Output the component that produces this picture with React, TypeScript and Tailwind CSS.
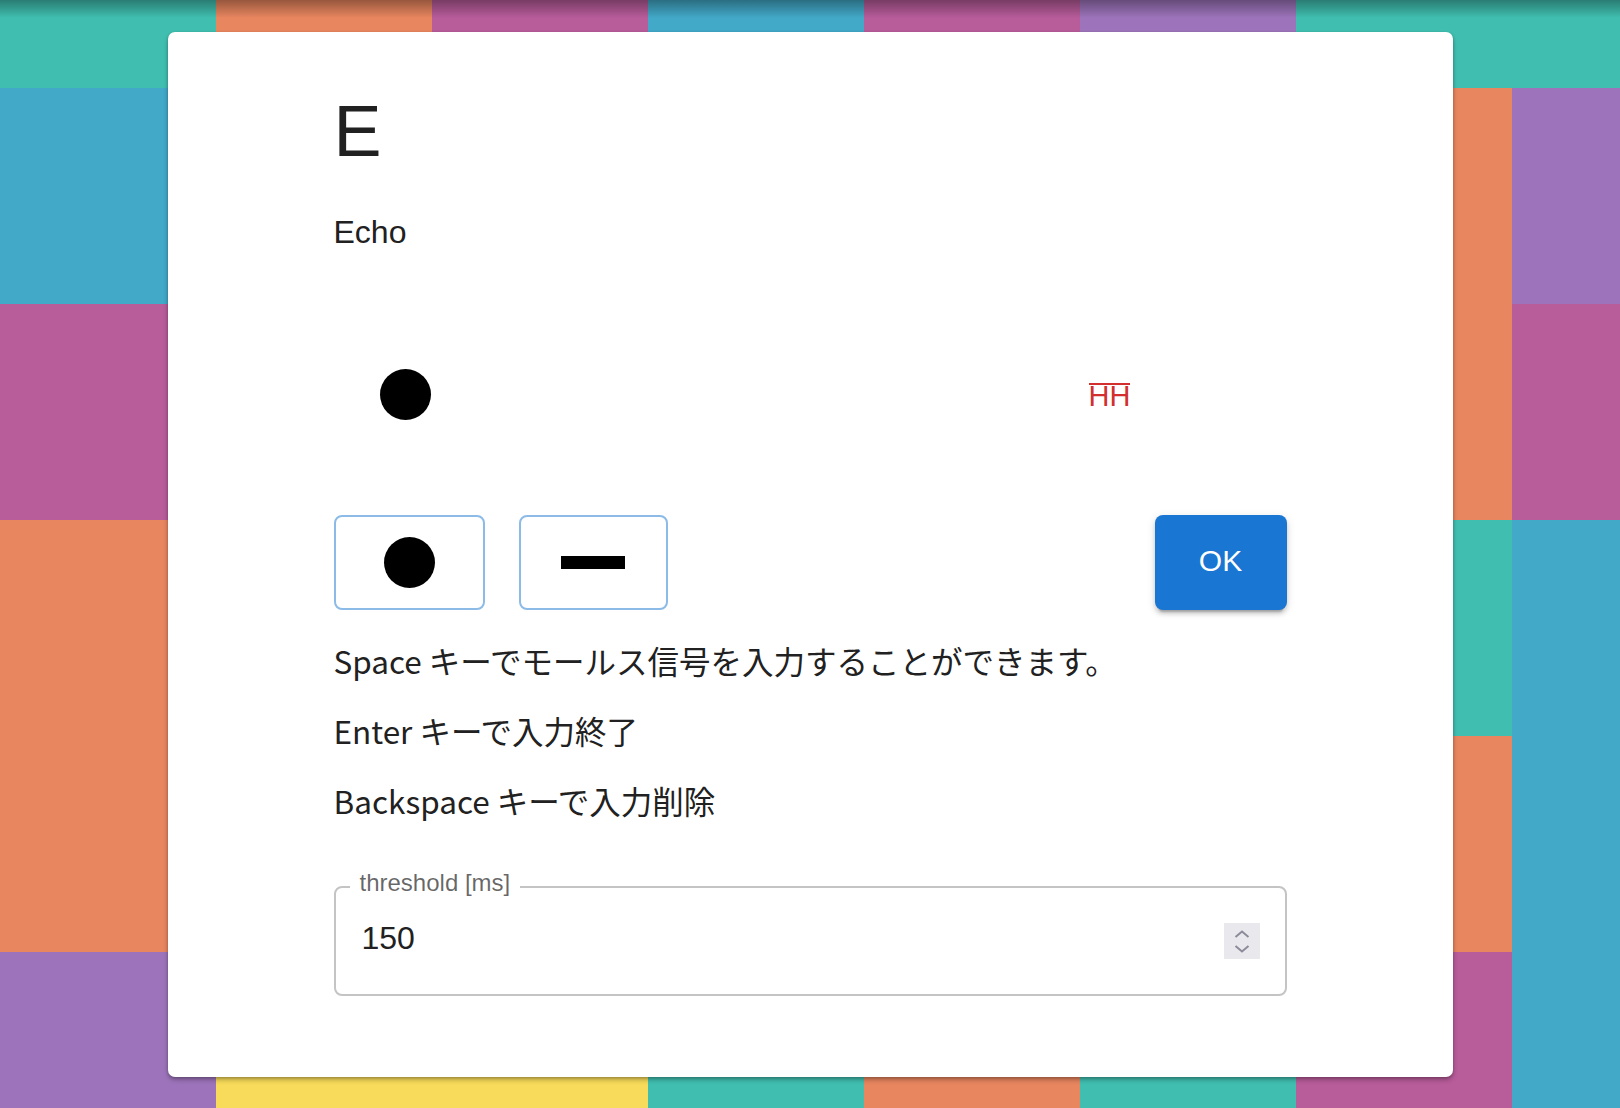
import React from "react";

const TEAL = "bg-[#40bfb0]";
const ORANGE = "bg-[#e8865f]";
const MAGENTA = "bg-[#b85c9a]";
const BLUE = "bg-[#42a9c8]";
const PURPLE = "bg-[#9d74bb]";
const YELLOW = "bg-[#f8db5a]";

// background tiles, 8 columns x 6 rows of 216px
const tiles: string[][] = [
  [TEAL, ORANGE, MAGENTA, BLUE, MAGENTA, PURPLE, TEAL, TEAL],
  [BLUE, TEAL, ORANGE, PURPLE, BLUE, MAGENTA, ORANGE, PURPLE],
  [MAGENTA, BLUE, TEAL, ORANGE, YELLOW, TEAL, ORANGE, MAGENTA],
  [ORANGE, PURPLE, MAGENTA, TEAL, BLUE, ORANGE, TEAL, BLUE],
  [ORANGE, TEAL, BLUE, MAGENTA, PURPLE, TEAL, ORANGE, BLUE],
  [PURPLE, YELLOW, YELLOW, TEAL, ORANGE, TEAL, MAGENTA, BLUE],
];

function Background() {
  return (
    <div className="absolute left-0 top-[-128px] grid grid-cols-[repeat(8,216px)] grid-rows-[repeat(6,216px)]">
      {tiles.flat().map((c, i) => (
        <div key={i} className={c} />
      ))}
    </div>
  );
}

function Dot() {
  return <div className="w-[51px] h-[51px] rounded-full bg-black" />;
}

function Spinner() {
  return (
    <div className="w-[36px] h-[36px] bg-[#e9e9ed] flex flex-col items-center justify-center gap-[7px]">
      <svg width="16" height="8" viewBox="0 0 16 8" fill="none">
        <path d="M1.5 7 L8 1.5 L14.5 7" stroke="#8b8b99" strokeWidth="2" />
      </svg>
      <svg width="16" height="8" viewBox="0 0 16 8" fill="none">
        <path d="M1.5 1 L8 6.5 L14.5 1" stroke="#8b8b99" strokeWidth="2" />
      </svg>
    </div>
  );
}

export default function App() {
  return (
    <div className="relative w-[1620px] h-[1108px] overflow-hidden">
      <Background />
      <div className="absolute top-0 left-0 right-0 h-[18px] bg-gradient-to-b from-black/35 to-transparent" />

      <div className="relative pt-[32px]">
        <div className="mx-auto w-[1285px] bg-white rounded-[7px] shadow-[0_3px_5px_rgba(0,0,0,0.25),0_1px_3px_rgba(0,0,0,0.2)] px-[166px] pt-[57px] pb-[81px] text-[#212121]">
          <h1 className="text-[72px] leading-[84px] font-['Liberation_Sans',Arial,sans-serif]">
            E
          </h1>
          <p className="mt-[35px] text-[32px] leading-[48px] font-['Liberation_Sans',Arial,sans-serif]">
            Echo
          </p>

          {/* morse display */}
          <div className="mt-[88px] h-[101px] flex items-center pl-[46px]">
            <Dot />
            <span className="ml-[658px] inline-block border-t-2 border-[#d32f2f] text-[#d32f2f] text-[29px] leading-[22px] font-['Liberation_Sans',Arial,sans-serif]">
              HH
            </span>
          </div>

          {/* input buttons */}
          <div className="mt-[70px] flex items-center">
            <button className="w-[151px] h-[95px] border-2 border-[#8cbbe8] rounded-[8px] flex items-center justify-center">
              <Dot />
            </button>
            <button className="ml-[34px] w-[149px] h-[95px] border-2 border-[#8cbbe8] rounded-[8px] flex items-center justify-center">
              <div className="w-[64px] h-[13px] bg-black" />
            </button>
            <button className="ml-auto w-[132px] h-[95px] pb-[4px] rounded-[8px] bg-[#1976d2] text-white text-[30px] font-['Liberation_Sans',Arial,sans-serif] shadow-[0_6px_2px_-4px_rgba(0,0,0,0.2),0_4px_4px_0_rgba(0,0,0,0.14),0_2px_10px_0_rgba(0,0,0,0.12)]">
              OK
            </button>
          </div>

          <div className="mt-[26px] flex flex-col gap-[22px] text-[31.5px] leading-[48px] font-['Noto_Sans_CJK_JP',sans-serif]">
            <p>Space キーでモールス信号を入力することができます。</p>
            <p>Enter キーで入力終了</p>
            <p>Backspace キーで入力削除</p>
          </div>

          {/* threshold field */}
          <div className="relative mt-[62px] h-[110px] border-2 border-[#c4c4c4] rounded-[8px] flex items-center pl-[26px] pr-[25px]">
            <span className="absolute left-[14px] top-[-5px] -translate-y-1/2 px-[10px] bg-white text-[24px] leading-[28px] text-black/60 font-['Liberation_Sans',Arial,sans-serif]">
              threshold [ms]
            </span>
            <input
              className="flex-1 min-w-0 mb-[6px] bg-transparent outline-none text-[32px] text-[#212121] font-['Liberation_Sans',Arial,sans-serif]"
              defaultValue="150"
            />
            <Spinner />
          </div>
        </div>
      </div>
    </div>
  );
}
